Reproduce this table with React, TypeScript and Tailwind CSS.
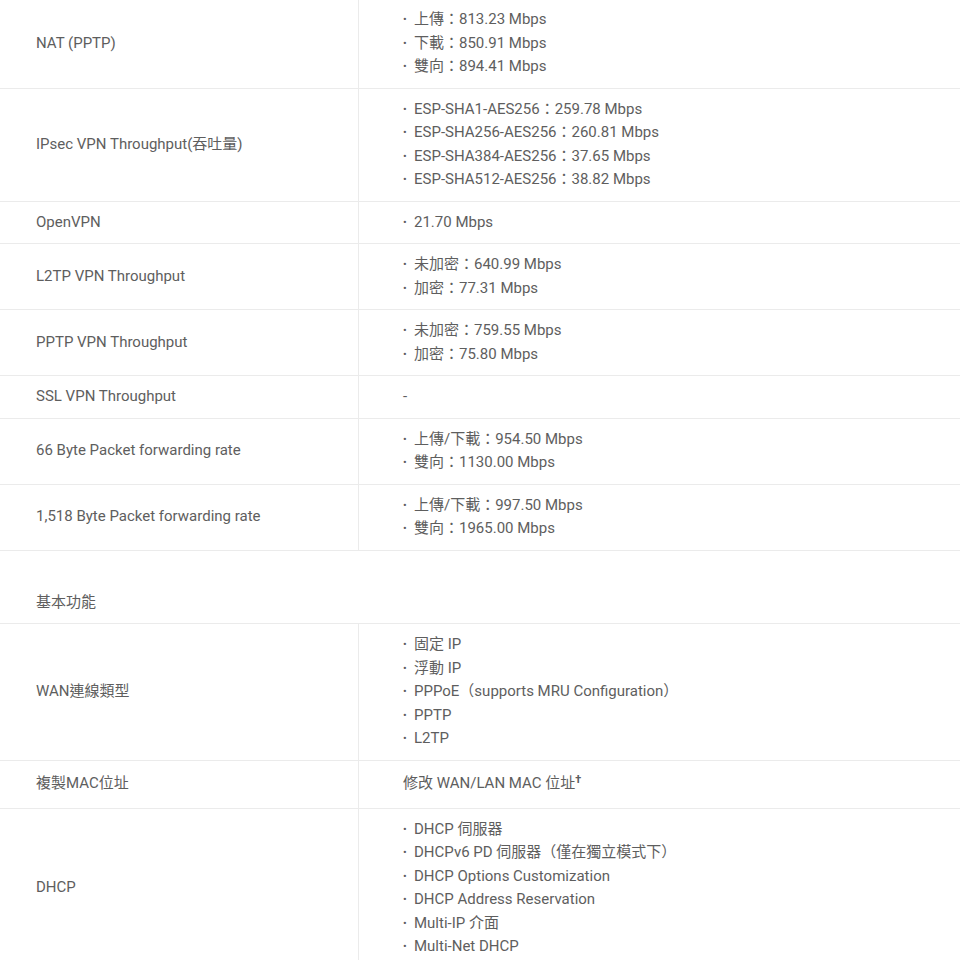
import React from 'react'

type SpecRow = {
  label: string
  items?: string[]
  text?: React.ReactNode
  tall?: boolean
}

const performance: SpecRow[] = [
  { label: 'NAT (PPTP)', items: ['上傳：813.23 Mbps', '下載：850.91 Mbps', '雙向：894.41 Mbps'] },
  {
    label: 'IPsec VPN Throughput(吞吐量)',
    items: [
      'ESP-SHA1-AES256：259.78 Mbps',
      'ESP-SHA256-AES256：260.81 Mbps',
      'ESP-SHA384-AES256：37.65 Mbps',
      'ESP-SHA512-AES256：38.82 Mbps',
    ],
  },
  { label: 'OpenVPN', items: ['21.70 Mbps'] },
  { label: 'L2TP VPN Throughput', items: ['未加密：640.99 Mbps', '加密：77.31 Mbps'] },
  { label: 'PPTP VPN Throughput', items: ['未加密：759.55 Mbps', '加密：75.80 Mbps'] },
  { label: 'SSL VPN Throughput', text: '-' },
  { label: '66 Byte Packet forwarding rate', items: ['上傳/下載：954.50 Mbps', '雙向：1130.00 Mbps'] },
  { label: '1,518 Byte Packet forwarding rate', items: ['上傳/下載：997.50 Mbps', '雙向：1965.00 Mbps'] },
]

const basics: SpecRow[] = [
  {
    label: 'WAN連線類型',
    items: ['固定 IP', '浮動 IP', 'PPPoE（supports MRU Configuration）', 'PPTP', 'L2TP'],
  },
  {
    label: '複製MAC位址',
    tall: true,
    text: (
      <>
        修改 WAN/LAN MAC 位址<sup className="text-[11px] font-bold">†</sup>
      </>
    ),
  },
  {
    label: 'DHCP',
    items: [
      'DHCP 伺服器',
      'DHCPv6 PD 伺服器（僅在獨立模式下）',
      'DHCP Options Customization',
      'DHCP Address Reservation',
      'Multi-IP 介面',
      'Multi-Net DHCP',
    ],
  },
]

function Row({ row }: { row: SpecRow }) {
  return (
    <div className="flex border-b border-[#ebebeb]">
      <div className="flex w-[359px] shrink-0 items-center border-r border-[#ebebeb] pl-[36px]">
        {row.label}
      </div>
      <div className={`flex-1 pl-[44px] ${row.tall ? 'py-[11.75px]' : 'py-[9px]'}`}>
        {row.items ? (
          <ul>
            {row.items.map((item) => (
              <li key={item} className="flex">
                <span className="inline-block w-[11px] text-[11px]">•</span>
                <span>{item}</span>
              </li>
            ))}
          </ul>
        ) : (
          <p>{row.text}</p>
        )}
      </div>
    </div>
  )
}

export default function App() {
  return (
    <div
      lang="zh-Hant"
      className="-mt-[1px] min-h-[960px] bg-white text-[15px] leading-[23.5px] text-[#5e5e5e]"
      style={{ fontFamily: 'Roboto, "Noto Sans CJK TC", sans-serif' }}
    >
      {performance.map((row) => (
        <Row key={row.label} row={row} />
      ))}

      <div className="border-b border-[#ebebeb] pb-[9px] pl-[36px] pt-[40px]">基本功能</div>

      {basics.map((row) => (
        <Row key={row.label} row={row} />
      ))}
    </div>
  )
}
